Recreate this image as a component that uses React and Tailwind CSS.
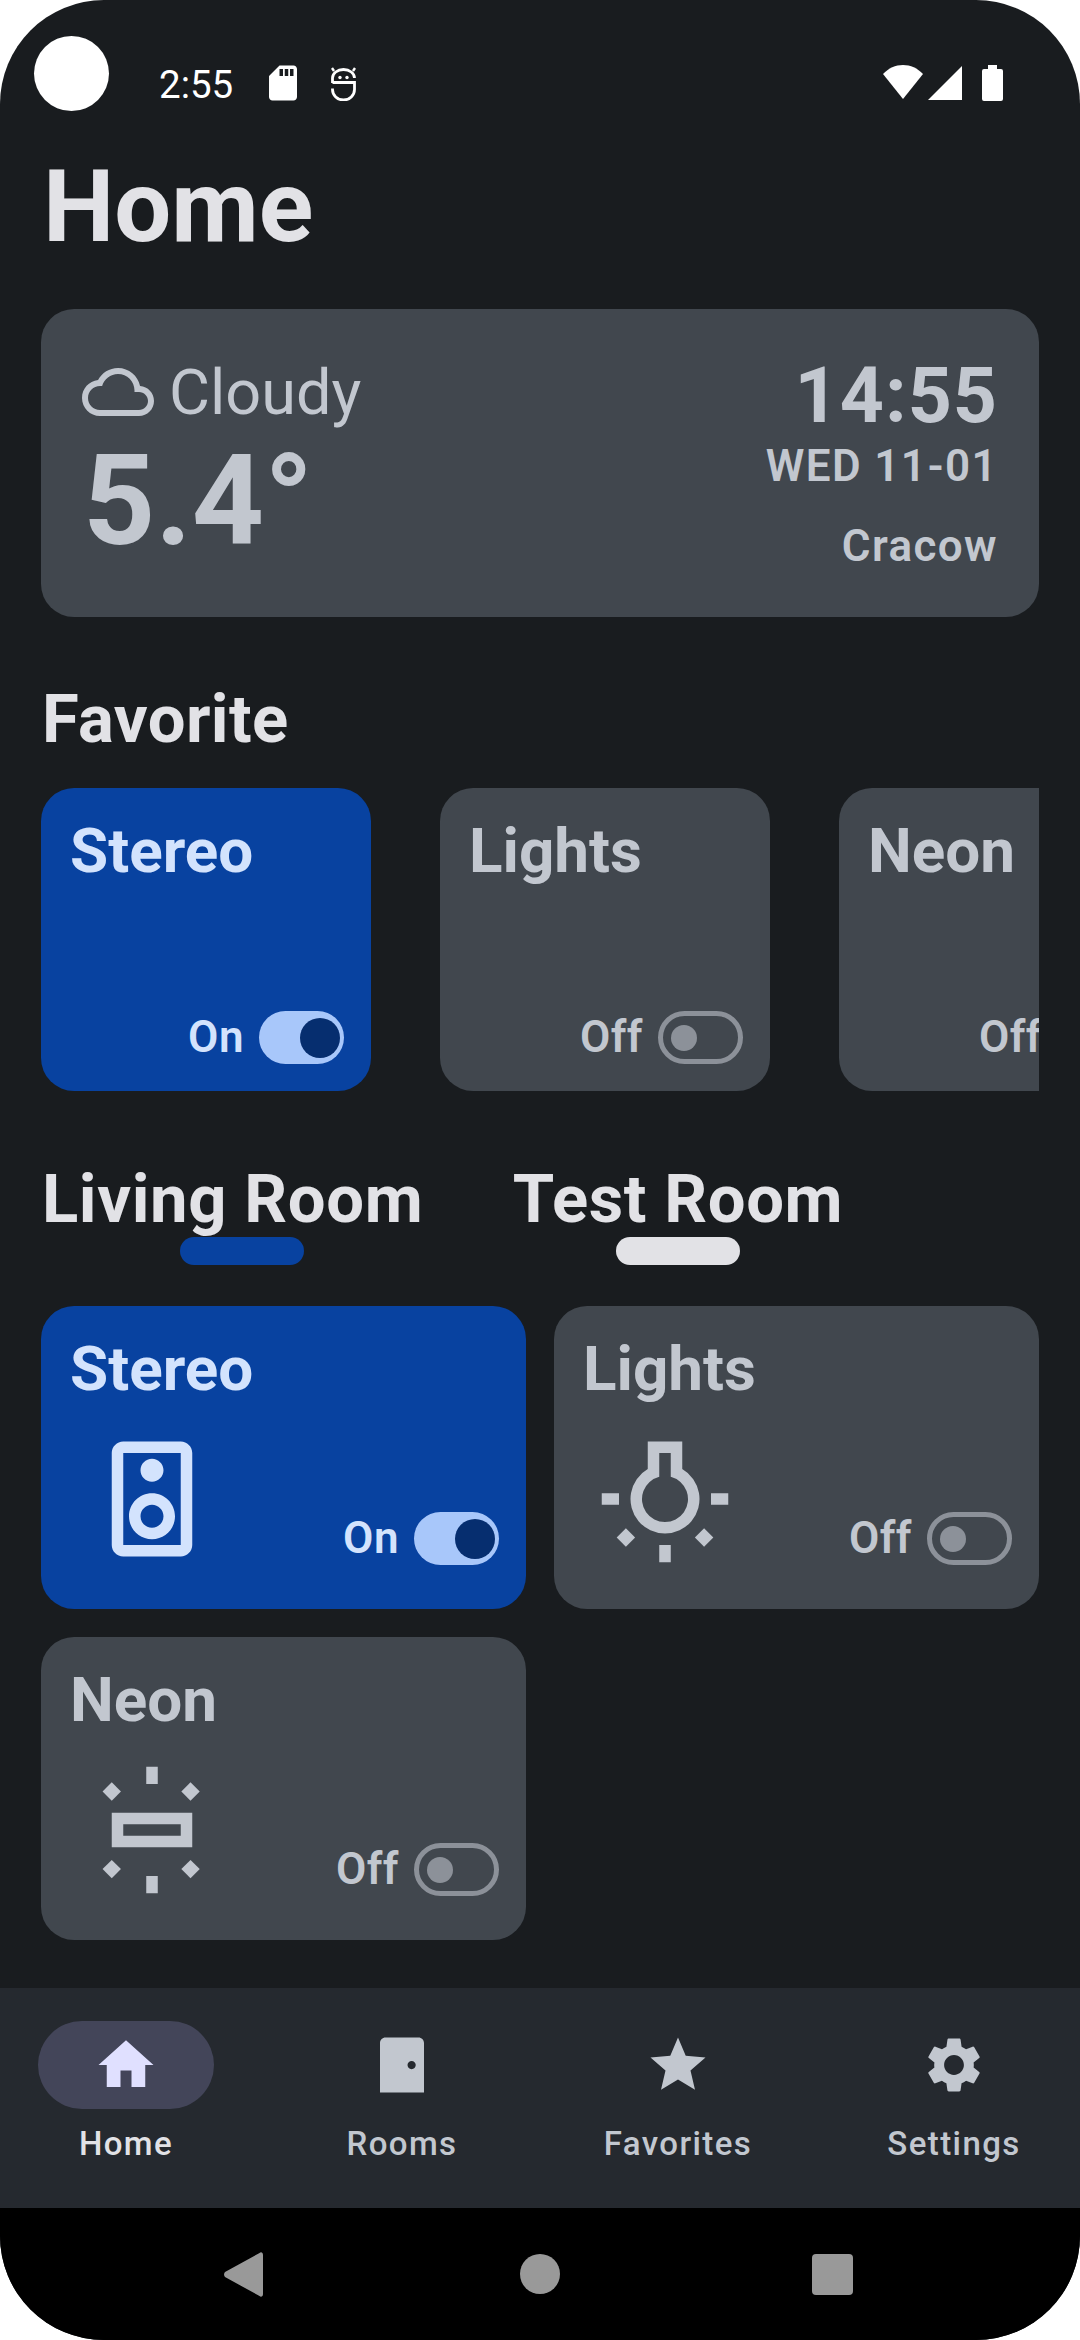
const CARD_OFF = 'bg-[#41474e] text-[#c2c7cf]';
const CARD_ON = 'bg-[#0842a0] text-[#d3e3fd]';

function Icon({ size, className, children }) {
  return (
    <svg viewBox="0 0 24 24" width={size} height={size} fill="currentColor" className={className}>
      {children}
    </svg>
  );
}

function Diamond({ x, y }) {
  return <path d={`M${x} ${y - 1.6}L${x + 1.6} ${y}L${x} ${y + 1.6}L${x - 1.6} ${y}Z`} />;
}

function SpeakerIcon() {
  return (
    <Icon size={138}>
      <path d="M17 2H7c-1.1 0-2 .9-2 2v16c0 1.1.89 1.99 2 1.99L17 22c1.1 0 2-.9 2-2V4c0-1.1-.9-2-2-2zM7 20V4h10v16H7zm5-11c1.1 0 2-.9 2-2s-.9-2-2-2c-1.11 0-2 .9-2 2s.89 2 2 2zm0 2c-2.21 0-4 1.79-4 4s1.79 4 4 4 4-1.79 4-4-1.79-4-4-4zm0 6c-1.1 0-2-.9-2-2s.9-2 2-2 2 .9 2 2-.9 2-2 2z" />
    </Icon>
  );
}

function BulbIcon() {
  return (
    <Icon size={138}>
      <path
        fillRule="evenodd"
        d="M9 2h6v4.8A6 6 0 1 1 9 6.8ZM11 4v4.13A4 4 0 1 0 13 8.13V4Z"
      />
      <path d="M1 11h3v2H1zM20 11h3v2h-3zM11 20h2v3h-2z" />
      <Diamond x={5.2} y={18.7} />
      <Diamond x={18.8} y={18.7} />
    </Icon>
  );
}

function NeonIcon() {
  return (
    <Icon size={138}>
      <path fillRule="evenodd" d="M5 9h14v6H5ZM7 11v2h10v-2Z" />
      <path d="M11 1h2v3h-2zM11 20h2v3h-2z" />
      <Diamond x={5} y={5.3} />
      <Diamond x={18.7} y={5.3} />
      <Diamond x={5} y={18.8} />
      <Diamond x={18.7} y={18.8} />
    </Icon>
  );
}

function Toggle({ on }) {
  if (on) {
    return (
      <div className="flex h-[53px] w-[85px] shrink-0 items-center justify-end rounded-full bg-[#a8c7fa] pr-[4px]">
        <div className="h-[40px] w-[40px] rounded-full bg-[#062e6f]" />
      </div>
    );
  }
  return (
    <div className="flex h-[53px] w-[85px] shrink-0 items-center rounded-full border-[5px] border-[#8c9199] pl-[8px]">
      <div className="h-[26px] w-[26px] rounded-full bg-[#8c9199]" />
    </div>
  );
}

function Switch({ on }) {
  return (
    <div className="flex items-center justify-end gap-[15px]">
      <span className="text-[44px] leading-[53px] font-semibold tracking-[0.5px]">{on ? 'On' : 'Off'}</span>
      <Toggle on={on} />
    </div>
  );
}

function FavoriteCard({ name, on }) {
  return (
    <div className={`flex h-[303px] w-[330px] shrink-0 flex-col justify-between rounded-[33px] pt-[28px] pr-[27px] pb-[27px] pl-[29px] ${on ? CARD_ON : CARD_OFF}`}>
      <div className="text-[62px] leading-[70px] font-bold">{name}</div>
      <Switch on={on} />
    </div>
  );
}

function RoomCard({ name, on, icon }) {
  return (
    <div className={`h-[303px] rounded-[33px] pt-[28px] pr-[27px] pl-[29px] ${on ? CARD_ON : CARD_OFF}`}>
      <div className="text-[62px] leading-[70px] font-bold">{name}</div>
      <div className="mt-[26px] flex items-end justify-between">
        <div className="ml-[13px]">{icon}</div>
        <div className="mb-[3px]">
          <Switch on={on} />
        </div>
      </div>
    </div>
  );
}

function NavItem({ label, active, children }) {
  return (
    <div className="flex flex-col items-center">
      <div className={`flex h-[88px] w-[176px] items-center justify-center rounded-[44px] ${active ? 'bg-[#434559] text-[#e0e0ff]' : 'text-[#c2c7cf]'}`}>
        {children}
      </div>
      <div className={`mt-[13px] text-[33px] leading-[44px] font-medium tracking-[1.4px] ${active ? 'text-[#e2e2e6]' : 'text-[#c2c7cf]'}`}>
        {label}
      </div>
    </div>
  );
}

function StatusBar() {
  return (
    <div className="flex h-[149px] items-start pt-[36px] pr-[77px] pl-[34px] text-white">
      <div className="h-[75px] w-[75px] rounded-full bg-white" />
      <span className="mt-[27px] ml-[50px] text-[38.5px] leading-[44px]">2:55</span>
      <Icon size={42} className="mt-[26px] ml-[29px]">
        <path d="M18 2h-8L4.02 8 4 20c0 1.1.9 2 2 2h12c1.1 0 2-.9 2-2V4c0-1.1-.9-2-2-2zm-6 6h-2V4h2v4zm3 0h-2V4h2v4zm3 0h-2V4h2v4z" />
      </Icon>
      <svg viewBox="0 0 25 34" width="25" height="34" className="mt-[31px] ml-[27px]" fill="none" stroke="currentColor" strokeWidth="2.8">
        <path d="M1.5 16v-5a11 8.5 0 0 1 22 0" />
        <path d="M1.5 15.5h22v7a11 10.5 0 0 1-22 0v-1" />
        <path d="M3 4 1 1M22 4l2-3" strokeWidth="2.4" />
        <circle cx="9" cy="10.5" r="1.7" fill="currentColor" stroke="none" />
        <circle cx="16" cy="10.5" r="1.7" fill="currentColor" stroke="none" />
      </svg>
      <div className="ml-auto mt-[29px] flex items-start gap-[5px]">
        <svg viewBox="0 0 40 34" width="40" height="34" fill="currentColor">
          <path d="M0 9C5.5 3.2 12.5 0 20 0s14.500 3.200 20 9L20 34Z" />
        </svg>
        <svg viewBox="0 0 34 34" width="34" height="34" fill="currentColor" className="mt-[1px]">
          <path d="M34 0v34H0Z" />
        </svg>
        <svg viewBox="0 0 21 36" width="21" height="36" fill="currentColor" className="ml-[15px]">
          <path d="M6 0h9v4h4a2 2 0 0 1 2 2v28a2 2 0 0 1-2 2H2a2 2 0 0 1-2-2V6a2 2 0 0 1 2-2h4Z" />
        </svg>
      </div>
    </div>
  );
}

function WeatherCard() {
  return (
    <div className="mx-[41px] mt-[44px] flex h-[308px] justify-between rounded-[33px] bg-[#41474e] pt-[46px] pr-[41px] pl-[41px] text-[#c2c7cf]">
      <div>
        <div className="flex items-center">
          <Icon size={72}>
            <path d="M19.35 10.04C18.67 6.59 15.64 4 12 4 9.11 4 6.6 5.64 5.35 8.04 2.34 8.36 0 10.91 0 14c0 3.31 2.69 6 6 6h13c2.76 0 5-2.24 5-5 0-2.64-2.05-4.78-4.65-4.96zM19 18H6c-2.21 0-4-1.79-4-4s1.79-4 4-4h.71C7.37 7.69 9.48 6 12 6c3.04 0 5.5 2.46 5.5 5.5v.5H19c1.66 0 3 1.34 3 3s-1.34 3-3 3z" />
          </Icon>
          <span className="ml-[15px] pt-[2px] text-[63px] leading-[72px]">Cloudy</span>
        </div>
        <div className="mt-[-1px] ml-[1px] text-[126px] leading-[146px] font-bold">5.4°</div>
      </div>
      <div className="flex flex-col items-end">
        <div className="mt-[-5px] text-[77px] leading-[92px] font-bold tracking-[1px]">14:55</div>
        <div className="mt-[-2px] text-[44px] leading-[52px] font-semibold tracking-[1.4px]">WED 11-01</div>
        <div className="mt-[28px] text-[44px] leading-[52px] font-semibold tracking-[1.4px]">Cracow</div>
      </div>
    </div>
  );
}

export default function App() {
  return (
    <div className="h-[2340px] w-[1080px] overflow-hidden bg-white font-[family-name:Roboto]">
      <div className="flex h-full flex-col overflow-hidden rounded-[104px] bg-[#191c1f]">
        <div className="h-[1988px] shrink-0">
          <StatusBar />
          <h1 className="ml-[43px] text-[101px] leading-[116px] font-bold text-[#e2e2e6]">Home</h1>
          <WeatherCard />

          <h2 className="mt-[63px] ml-[42px] text-[67px] leading-[78px] font-bold tracking-[0.4px] text-[#e2e2e6]">Favorite</h2>
          <div className="mx-[41px] mt-[30px] flex gap-[69px] overflow-hidden">
            <FavoriteCard name="Stereo" on />
            <FavoriteCard name="Lights" />
            <FavoriteCard name="Neon" />
          </div>

          <div className="mt-[71px] ml-[41px] flex text-[#e2e2e6]">
            <div className="flex w-[402px] flex-col items-center">
              <div className="ml-[1px] self-start text-[67px] leading-[74px] font-bold tracking-[0.6px]">Living Room</div>
              <div className="mt-[1px] h-[28px] w-[124px] rounded-[14px] bg-[#0842a0]" />
            </div>
            <div className="flex w-[470px] flex-col items-center">
              <div className="text-[67px] leading-[74px] font-bold tracking-[0.6px]">Test Room</div>
              <div className="mt-[1px] h-[28px] w-[124px] rounded-[14px] bg-[#e2e2e6]" />
            </div>
          </div>

          <div className="mx-[41px] mt-[41px] grid grid-cols-2 gap-x-[28px] gap-y-[28px]">
            <RoomCard name="Stereo" on icon={<SpeakerIcon />} />
            <RoomCard name="Lights" icon={<BulbIcon />} />
            <RoomCard name="Neon" icon={<NeonIcon />} />
          </div>
        </div>

        <nav className="h-[220px] shrink-0 bg-[#25292f] pt-[33px]">
          <div className="-mx-3 grid grid-cols-4">
            <NavItem label="Home" active>
              <Icon size={66}><path d="M10 20v-6h4v6h5v-8h3L12 3 2 12h3v8z" /></Icon>
            </NavItem>
            <NavItem label="Rooms">
              <Icon size={66}><path d="M18 2H6c-1.100 0-2 .9-2 2v18h16V4c0-1.100-.9-2-2-2zm-2.500 11.500c-.83 0-1.500-.67-1.500-1.500s.67-1.500 1.500-1.500 1.500.67 1.500 1.500-.67 1.500-1.500 1.500z" /></Icon>
            </NavItem>
            <NavItem label="Favorites">
              <Icon size={66}><path d="M12 17.27L18.18 21l-1.64-7.03L22 9.24l-7.19-.61L12 2 9.19 8.63 2 9.24l5.46 4.73L5.82 21z" /></Icon>
            </NavItem>
            <NavItem label="Settings">
              <Icon size={66}><path d="M19.14 12.94c.04-.3.06-.61.06-.94 0-.32-.02-.64-.07-.94l2.03-1.58c.18-.14.23-.41.12-.61l-1.92-3.32c-.12-.22-.37-.29-.59-.22l-2.39.96c-.5-.38-1.03-.7-1.62-.94l-.36-2.54c-.04-.24-.24-.41-.48-.41h-3.84c-.24 0-.43.17-.47.41l-.36 2.54c-.59.24-1.13.57-1.62.94l-2.39-.96c-.22-.08-.47 0-.59.22L2.74 8.87c-.12.21-.08.47.12.61l2.03 1.58c-.05.3-.09.63-.09.94s.02.64.07.94l-2.03 1.58c-.18.14-.23.41-.12.61l1.920 3.320c.12.22.37.29.59.22l2.39-.96c.5.38 1.03.7 1.62.94l.36 2.54c.05.24.24.41.48.41h3.84c.24 0 .44-.17.47-.41l.36-2.54c.59-.24 1.13-.56 1.62-.94l2.39.96c.22.08.47 0 .59-.22l1.92-3.32c.12-.22.07-.47-.12-.61l-2.01-1.58zM12 15.6c-1.98 0-3.6-1.62-3.6-3.6s1.62-3.6 3.6-3.6 3.6 1.62 3.6 3.6-1.62 3.6-3.6 3.6z" /></Icon>
            </NavItem>
          </div>
        </nav>

        <div className="flex flex-1 items-center bg-black pl-[224px]">
          <svg viewBox="0 0 39 45" width="39" height="45" fill="#999999">
            <path d="M39 3v39c0 2.500-2 3.500-3.500 2L1 25c-1.300-1.500-1.300-3.500 0-5L35.500 1c1.500-1.500 3.500-.5 3.500 2Z" />
          </svg>
          <div className="ml-[257px] h-[40px] w-[40px] rounded-full bg-[#999999]" />
          <div className="ml-[252px] h-[41px] w-[41px] rounded-[4px] bg-[#999999]" />
        </div>
      </div>
    </div>
  );
}
